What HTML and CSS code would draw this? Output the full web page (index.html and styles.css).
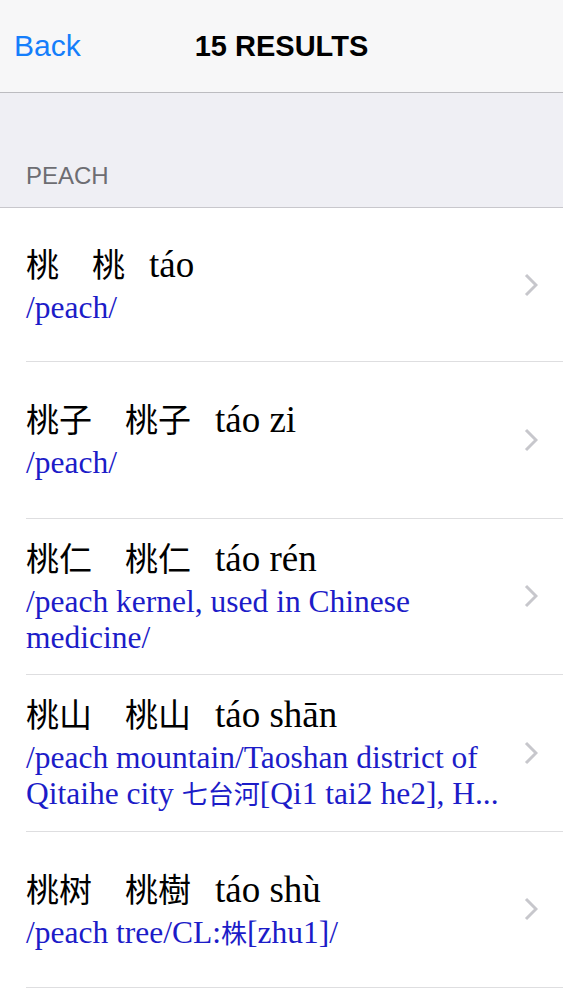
FILE: index.html
```html
<!DOCTYPE html>
<html lang="en">
<head>
<meta charset="utf-8">
<title>15 Results</title>
<link rel="stylesheet" href="styles.css">
</head>
<body>
<header class="nav">
  <a class="back">Back</a>
  <h1 class="nav-title">15 RESULTS</h1>
  <span></span>
</header>
<div class="section-header">PEACH</div>
<ul class="list">
  <li class="row">
    <div class="content">
      <div class="head"><span class="cjk simp">桃</span><span class="cjk trad">桃</span><span class="pinyin">táo</span></div>
      <div class="def">/peach/</div>
    </div>
    <svg class="chev" width="14" height="24" viewBox="0 0 14 24"><polyline points="2,2 12,12 2,22" fill="none" stroke="#c7c7cc" stroke-width="3"/></svg>
  </li>
  <li class="row">
    <div class="content">
      <div class="head"><span class="cjk simp">桃子</span><span class="cjk trad">桃子</span><span class="pinyin">táo zi</span></div>
      <div class="def">/peach/</div>
    </div>
    <svg class="chev" width="14" height="24" viewBox="0 0 14 24"><polyline points="2,2 12,12 2,22" fill="none" stroke="#c7c7cc" stroke-width="3"/></svg>
  </li>
  <li class="row">
    <div class="content">
      <div class="head"><span class="cjk simp">桃仁</span><span class="cjk trad">桃仁</span><span class="pinyin">táo rén</span></div>
      <div class="def"><div class="line">/peach kernel, used in Chinese</div><div class="line">medicine/</div></div>
    </div>
    <svg class="chev" width="14" height="24" viewBox="0 0 14 24"><polyline points="2,2 12,12 2,22" fill="none" stroke="#c7c7cc" stroke-width="3"/></svg>
  </li>
  <li class="row">
    <div class="content">
      <div class="head"><span class="cjk simp">桃山</span><span class="cjk trad">桃山</span><span class="pinyin">táo shān</span></div>
      <div class="def"><div class="line">/peach mountain/Taoshan district of</div><div class="line">Qitaihe city <span class="dcjk">七台河</span>[Qi1 tai2 he2], H...</div></div>
    </div>
    <svg class="chev" width="14" height="24" viewBox="0 0 14 24"><polyline points="2,2 12,12 2,22" fill="none" stroke="#c7c7cc" stroke-width="3"/></svg>
  </li>
  <li class="row">
    <div class="content">
      <div class="head"><span class="cjk simp">桃树</span><span class="cjk trad">桃樹</span><span class="pinyin">táo shù</span></div>
      <div class="def">/peach tree/CL:<span class="dcjk">株</span>[zhu1]/</div>
    </div>
    <svg class="chev" width="14" height="24" viewBox="0 0 14 24"><polyline points="2,2 12,12 2,22" fill="none" stroke="#c7c7cc" stroke-width="3"/></svg>
  </li>
</ul>
</body>
</html>
```
FILE: styles.css
```css
html, body {
  margin: 0;
  padding: 0;
  background: #ffffff;
}

body {
  font-family: "Liberation Sans", Arial, sans-serif;
}

.nav {
  height: 92px;
  background: #f7f7f8;
  border-bottom: 1px solid #bcbcc0;
  display: grid;
  grid-template-columns: 1fr auto 1fr;
  align-items: center;
}

.back {
  justify-self: start;
  margin-left: 14px;
  font-size: 30px;
  color: #157efb;
  text-decoration: none;
}

.nav-title {
  margin: 0;
  font-size: 29px;
  font-weight: bold;
  color: #000;
}

.section-header {
  height: 95px;
  padding: 0 0 19px 26px;
  background: #efeff4;
  border-bottom: 1px solid #c8c7cc;
  display: flex;
  align-items: flex-end;
  font-size: 24px;
  line-height: 24px;
  color: #6d6d72;
}

.list {
  list-style: none;
  margin: 0;
  padding: 0;
}

.row {
  box-sizing: border-box;
  margin-left: 26px;
  height: 156.5px;
  padding-bottom: 5px;
  border-bottom: 1px solid #dedee0;
  display: flex;
  align-items: center;
}

.row:first-child {
  height: 154px;
}

.content {
  width: 480px;
}

.head {
  font-family: "Liberation Serif", "Noto Sans CJK SC", serif;
  font-size: 37px;
  line-height: 50px;
  color: #000;
  white-space: nowrap;
}

.cjk {
  font-family: "Noto Sans CJK SC", "Noto Sans CJK TC", sans-serif;
  font-size: 33px;
}

.simp {
  margin-right: 33px;
}

.trad {
  margin-right: 24px;
}

.def {
  font-family: "Liberation Serif", "Noto Sans CJK SC", serif;
  font-size: 31.5px;
  line-height: 36px;
  color: #1c1cc8;
}

.line {
  white-space: nowrap;
}

.dcjk {
  font-family: "Noto Sans CJK SC", sans-serif;
  font-size: 26px;
  line-height: 1;
}

.chev {
  margin-left: auto;
  margin-right: 25px;
  margin-top: 5px;
  flex: none;
}
```
